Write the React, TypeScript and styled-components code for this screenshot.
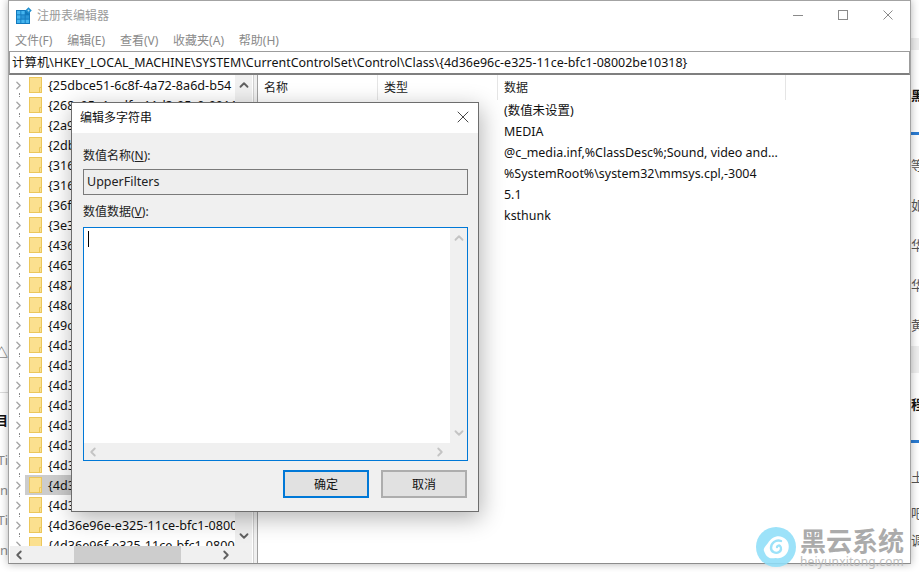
import React from 'react';
import styled, { createGlobalStyle } from 'styled-components';
import { FiChevronDown, FiChevronLeft, FiChevronRight, FiChevronUp, FiX } from 'react-icons/fi';

const uiFont = `"Noto Sans", "Noto Sans CJK SC", sans-serif`;

const treeRows = [
	'{25dbce51-6c8f-4a72-8a6d-b54',
	'{268c95a1-edfe-11d3-95c0-0011',
	'{2a9',
	'{2db',
	'{316',
	'{316',
	'{36f',
	'{3e3',
	'{436',
	'{465',
	'{487',
	'{48d',
	'{49c',
	'{4d3',
	'{4d3',
	'{4d3',
	'{4d3',
	'{4d3',
	'{4d3',
	'{4d3',
	'{4d3',
	'{4d3',
	'{4d36e96e-e325-11ce-bfc1-0800',
	'{4d36e96f-e325-11ce-bfc1-0800',
];

const listData = [
	'(数值未设置)',
	'MEDIA',
	'@c_media.inf,%ClassDesc%;Sound, video and...',
	'%SystemRoot%\\system32\\mmsys.cpl,-3004',
	'5.1',
	'ksthunk',
];

const menus = ['文件(F)', '编辑(E)', '查看(V)', '收藏夹(A)', '帮助(H)'];

function RegistryIcon() {
	return (
		<svg width="16" height="17" viewBox="0 0 16 17">
			<rect x="0" y="3" width="14" height="14" fill="#1279bd" />
			<rect x="1" y="4" width="3.4" height="3.4" fill="#45b5ef" />
			<rect x="5.3" y="4" width="3.4" height="3.4" fill="#45b5ef" />
			<rect x="1" y="8.3" width="3.4" height="3.4" fill="#45b5ef" />
			<rect x="5.3" y="8.3" width="3.4" height="3.4" fill="#2a95d6" />
			<rect x="9.6" y="8.3" width="3.4" height="3.4" fill="#2a95d6" />
			<rect x="1" y="12.6" width="3.4" height="3.4" fill="#45b5ef" />
			<rect x="5.3" y="12.6" width="3.4" height="3.4" fill="#45b5ef" />
			<rect x="9.6" y="12.6" width="3.4" height="3.4" fill="#45b5ef" />
			<rect x="10.2" y="1.2" width="4.6" height="4.6" fill="#1f8fd0" transform="rotate(45 12.5 3.5)" />
			<rect x="11.7" y="2.7" width="1.6" height="1.6" fill="#9fd8f5" transform="rotate(45 12.5 3.5)" />
		</svg>
	);
}

function FolderIcon() {
	return (
		<FolderSvg width="13" height="16" viewBox="0 0 13 16">
			<rect x="0.5" y="0.5" width="12" height="15" fill="#fbe08f" stroke="#ecc75a" />
			<path d="M10.5 15.5v-5h2" fill="none" stroke="#ecc75a" />
		</FolderSvg>
	);
}

function CloseGlyph() {
	return (
		<svg width="10" height="10" viewBox="0 0 10 10">
			<path d="M0.5 0.5l9 9M9.5 0.5l-9 9" stroke="#8a8a8a" strokeWidth="1" fill="none" />
		</svg>
	);
}

function WatermarkLogo() {
	return (
		<svg width="40" height="40" viewBox="0 0 40 40">
			<circle cx="20" cy="20" r="20" fill="#8fdff9" />
			<path
				d="M8 24c-1-3 2-5 4-8 3-5 9-8 14-6 6 2 8 8 6 14-2 5-7 8-12 7-3 0-6 1-8-1-2-1-3-4-4-6z"
				fill="#fff"
			/>
			<path
				d="M25 14c-5-2-10 2-10 7 0 4 5 6 8 4 2-1 3-4 1-6-1-1-3 0-3 1"
				fill="none"
				stroke="#8fdff9"
				strokeWidth="2.4"
				strokeLinecap="round"
			/>
		</svg>
	);
}

export default function App() {
	return (
		<Desktop>
			<GlobalStyle />
			<LeftStrip>
				<PeekText $top={344} $align="right">△</PeekText>
				<PeekRule $top={32} $height={1} />
				<PeekText $top={19} $bold $align="right">目</PeekText>
				<PeekText $top={24} $align="right" $muted>Ti</PeekText>
				<PeekText $top={14} $align="right" $muted>in</PeekText>
				<PeekText $top={14} $align="right" $muted>Ti</PeekText>
				<PeekText $top={14} $align="right" $muted>in</PeekText>
			</LeftStrip>

			<RegWindow>
				<TitleBar>
					<RegistryIcon />
					<TitleText>注册表编辑器</TitleText>
					<WindowControls>
						<MinimizeGlyph />
						<MaximizeGlyph />
						<CloseGlyph />
					</WindowControls>
				</TitleBar>
				<MenuBar>
					{menus.map(m => (
						<MenuItem key={m}>{m}</MenuItem>
					))}
				</MenuBar>
				<AddressBar>
					计算机\HKEY_LOCAL_MACHINE\SYSTEM\CurrentControlSet\Control\Class\{'{'}4d36e96c-e325-11ce-bfc1-08002be10318{'}'}
				</AddressBar>
				<Body>
					<TreePane>
						<TreeMain>
							<TreeRows>
								{treeRows.map((label, i) => (
									<TreeRow key={i}>
										<Expander>
											<FiChevronRight size={15} strokeWidth={2.6} color="#a6a6a6" />
										</Expander>
										<RowBody $selected={i === 20}>
											<FolderIcon />
											<RowLabel>{label}</RowLabel>
										</RowBody>
									</TreeRow>
								))}
							</TreeRows>
							<VScroll>
								<FiChevronUp size={14} strokeWidth={3.2} color="#606060" />
								<FiChevronDown size={14} strokeWidth={3.2} color="#606060" />
							</VScroll>
						</TreeMain>
						<HScroll>
							<FiChevronLeft size={14} strokeWidth={3.2} color="#606060" />
							<HThumb />
							<FiChevronRight size={14} strokeWidth={3.2} color="#606060" />
						</HScroll>
					</TreePane>
					<Splitter />
					<ListPane>
						<ListHeader>
							<HeaderCell $width={120}>名称</HeaderCell>
							<HeaderCell $width={120}>类型</HeaderCell>
							<HeaderCell $width={288}>数据</HeaderCell>
						</ListHeader>
						<ListValues>
							{listData.map(v => (
								<ListValue key={v}>{v}</ListValue>
							))}
						</ListValues>
					</ListPane>
				</Body>
			</RegWindow>

			<RightStrip>
				<PeekBlock $top={38} $height={12} />
				<PeekText $top={37} $bold>黑</PeekText>
				<PeekBar $top={29} />
				<PeekText $top={22}>等</PeekText>
				<PeekText $top={24}>如</PeekText>
				<PeekText $top={24}>华</PeekText>
				<PeekText $top={24}>华</PeekText>
				<PeekText $top={24}>黄</PeekText>
				<PeekBlock $top={13} $height={27} />
				<PeekText $top={23} $bold>程</PeekText>
				<PeekBar $top={28} />
				<PeekText $top={26}>土</PeekText>
				<PeekText $top={20}>吧</PeekText>
				<PeekText $top={11}>调</PeekText>
			</RightStrip>

			<Dialog>
				<DialogTitle>
					<span>编辑多字符串</span>
					<FiX size={20} strokeWidth={1} color="#222" />
				</DialogTitle>
				<DialogBody>
					<FieldLabel $top={14}>
						数值名称(<u>N</u>):
					</FieldLabel>
					<NameField>UpperFilters</NameField>
					<FieldLabel $top={8}>
						数值数据(<u>V</u>):
					</FieldLabel>
					<DataField>
						<DataMain>
							<DataText>
								<Caret />
							</DataText>
							<DataVScroll>
								<FiChevronUp size={14} strokeWidth={3.2} color="#c4c4c4" />
								<FiChevronDown size={14} strokeWidth={3.2} color="#c4c4c4" />
							</DataVScroll>
						</DataMain>
						<DataHScroll>
							<FiChevronLeft size={14} strokeWidth={3.2} color="#c4c4c4" />
							<FiChevronRight size={14} strokeWidth={3.2} color="#c4c4c4" />
						</DataHScroll>
					</DataField>
					<DialogButtons>
						<DialogButton $primary>确定</DialogButton>
						<DialogButton>取消</DialogButton>
					</DialogButtons>
				</DialogBody>
			</Dialog>

			<Watermark>
				<WatermarkLogo />
				<WatermarkText>
					<WatermarkName>黑云系统</WatermarkName>
					<WatermarkUrl>heiyunxitong.com</WatermarkUrl>
				</WatermarkText>
			</Watermark>
		</Desktop>
	);
}

const GlobalStyle = createGlobalStyle`
	html, body {
		margin: 0;
		padding: 0;
		background: #fff;
	}
	* {
		box-sizing: border-box;
	}
`;

const Desktop = styled.div`
	position: relative;
	width: 919px;
	height: 572px;
	overflow: hidden;
	display: flex;
	align-items: flex-start;
	font-family: ${uiFont};
	background: #fff;
`;

const LeftStrip = styled.div`
	width: 8px;
	height: 572px;
	flex-shrink: 0;
	overflow: hidden;
	display: flex;
	flex-direction: column;
	align-items: flex-end;
`;

const RightStrip = styled.div`
	width: 8px;
	height: 572px;
	flex-shrink: 0;
	overflow: hidden;
	display: flex;
	flex-direction: column;
`;

const PeekText = styled.div<{ $top: number; $bold?: boolean; $align?: string; $muted?: boolean }>`
	margin-top: ${p => p.$top}px;
	flex-shrink: 0;
	height: 16px;
	line-height: 16px;
	font-size: 13px;
	width: 14px;
	color: ${p => (p.$bold ? '#111' : p.$muted ? '#8a8a8a' : '#555')};
	font-weight: ${p => (p.$bold ? 700 : 400)};
	text-align: ${p => p.$align || 'left'};
`;

const PeekBlock = styled.div<{ $top: number; $height: number }>`
	margin-top: ${p => p.$top}px;
	height: ${p => p.$height}px;
	background: #eeeeee;
	flex-shrink: 0;
`;

const PeekBar = styled.div<{ $top: number }>`
	margin-top: ${p => p.$top}px;
	height: 3px;
	background: #2b7cd3;
	flex-shrink: 0;
`;

const PeekRule = styled.div<{ $top: number; $height: number }>`
	width: 8px;
	margin-top: ${p => p.$top}px;
	height: ${p => p.$height}px;
	background: #dcdcdc;
	flex-shrink: 0;
`;

const RegWindow = styled.div`
	width: 903px;
	height: 564px;
	flex-shrink: 0;
	background: #fff;
	border: 1px solid #a3a3a3;
	border-bottom-color: #8c8c8c;
	box-shadow: 0 0 8px rgba(0, 0, 0, 0.3);
	display: flex;
	flex-direction: column;
	position: relative;
`;

const TitleBar = styled.div`
	height: 28px;
	display: flex;
	align-items: center;
	padding: 0 17px 0 7px;
	flex-shrink: 0;
`;

const TitleText = styled.div`
	margin-left: 5px;
	font-size: 12px;
	color: #9b9b9b;
`;

const WindowControls = styled.div`
	margin-left: auto;
	display: flex;
	align-items: center;
	gap: 35px;
`;

const MinimizeGlyph = styled.div`
	width: 10px;
	height: 1px;
	background: #8a8a8a;
`;

const MaximizeGlyph = styled.div`
	width: 10px;
	height: 10px;
	border: 1px solid #8a8a8a;
`;

const MenuBar = styled.div`
	height: 22px;
	display: flex;
	align-items: center;
	padding-left: 6px;
	gap: 14.8px;
	flex-shrink: 0;
`;

const MenuItem = styled.div`
	font-size: 12px;
	color: #8a8a8a;
`;

const AddressBar = styled.div`
	height: 24px;
	flex-shrink: 0;
	border: 1px solid #9c9c9c;
	border-bottom: 2px solid #7f7f7f;
	padding-left: 2px;
	font-size: 12.45px;
	line-height: 21px;
	color: #111;
	white-space: nowrap;
`;

const Body = styled.div`
	flex: 1;
	min-height: 0;
	display: flex;
`;

const TreePane = styled.div`
	width: 243px;
	display: flex;
	flex-direction: column;
	padding-left: 1px;
`;

const TreeMain = styled.div`
	flex: 1;
	min-height: 0;
	display: flex;
`;

const TreeRows = styled.div`
	flex: 1;
	min-width: 0;
	overflow: hidden;
`;

const TreeRow = styled.div`
	position: relative;
	height: 20px;
	display: flex;
	align-items: center;

	/* dotted connector between the expanders */
	&::after {
		content: '';
		position: absolute;
		left: 9px;
		bottom: -2px;
		height: 4px;
		border-left: 1px dotted #8a8a8a;
	}
`;

const Expander = styled.div`
	width: 15px;
	flex-shrink: 0;
	padding-left: 2px;
	display: flex;
	align-items: center;
`;

const RowBody = styled.div<{ $selected?: boolean }>`
	flex: 1;
	min-width: 0;
	height: 20px;
	display: flex;
	align-items: center;
	padding-left: 4px;
	background: ${p => (p.$selected ? '#cccccc' : 'transparent')};
`;

const FolderSvg = styled.svg`
	flex-shrink: 0;
`;

const RowLabel = styled.div`
	margin-left: 6px;
	font-size: 12.6px;
	color: #111;
	white-space: nowrap;
`;

const VScroll = styled.div`
	width: 17px;
	flex-shrink: 0;
	background: #f0f0f0;
	display: flex;
	flex-direction: column;
	justify-content: space-between;
	align-items: center;
	padding: 3px 0;
`;

const HScroll = styled.div`
	height: 17px;
	flex-shrink: 0;
	background: #f0f0f0;
	display: flex;
	align-items: center;
	padding: 0 19px 0 2px;
	position: relative;
	justify-content: space-between;
`;

const HThumb = styled.div`
	position: absolute;
	left: 64px;
	width: 107px;
	height: 17px;
	background: #cdcdcd;
`;

const Splitter = styled.div`
	width: 5px;
	flex-shrink: 0;
	margin-left: 1px;
	background: #f0f0f0;
	border-left: 1px solid #d0d0d0;
	border-right: 1px solid #a0a0a0;
`;

const ListPane = styled.div`
	flex: 1;
	min-width: 0;
	display: flex;
	flex-direction: column;
`;

const ListHeader = styled.div`
	height: 25px;
	display: flex;
	flex-shrink: 0;
`;

const HeaderCell = styled.div<{ $width: number }>`
	width: ${p => p.$width}px;
	padding-left: 6px;
	font-size: 12px;
	line-height: 25px;
	color: #222;
	border-right: 1px solid #e5e5e5;
`;

const ListValues = styled.div`
	padding: 0 0 0 246px;
`;

const ListValue = styled.div`
	height: 21px;
	line-height: 21px;
	font-size: 12.45px;
	color: #111;
	white-space: nowrap;
`;

const Dialog = styled.div`
	position: absolute;
	left: 71px;
	top: 102px;
	width: 408px;
	height: 410px;
	border: 1px solid #6d6d6d;
	background: #f0f0f0;
	box-shadow: 2px 6px 22px rgba(0, 0, 0, 0.3);
	display: flex;
	flex-direction: column;
`;

const DialogTitle = styled.div`
	height: 30px;
	flex-shrink: 0;
	background: #fff;
	display: flex;
	align-items: center;
	justify-content: space-between;
	padding: 0 5px 2px 8px;
	font-size: 12px;
	color: #111;
`;

const DialogBody = styled.div`
	flex: 1;
	padding: 0 10px 0 11px;
	display: flex;
	flex-direction: column;
`;

const FieldLabel = styled.div<{ $top: number }>`
	margin-top: ${p => p.$top}px;
	height: 17px;
	line-height: 17px;
	font-size: 12px;
	color: #222;
`;

const NameField = styled.div`
	margin-top: 5px;
	height: 26px;
	line-height: 23px;
	border: 1px solid #7a7a7a;
	background: #eeeeee;
	padding-left: 3px;
	font-size: 12.5px;
	color: #222;
`;

const DataField = styled.div`
	margin-top: 7px;
	height: 234px;
	border: 1px solid #0078d7;
	background: #fff;
	display: flex;
	flex-direction: column;
`;

const DataMain = styled.div`
	flex: 1;
	min-height: 0;
	display: flex;
`;

const DataText = styled.div`
	flex: 1;
	padding: 3px 4px;
`;

const Caret = styled.div`
	width: 1px;
	height: 16px;
	background: #000;
`;

const DataVScroll = styled.div`
	width: 17px;
	flex-shrink: 0;
	background: #f0f0f0;
	display: flex;
	flex-direction: column;
	justify-content: space-between;
	align-items: center;
	padding: 3px 0;
`;

const DataHScroll = styled.div`
	height: 17px;
	flex-shrink: 0;
	background: #f0f0f0;
	display: flex;
	align-items: center;
	justify-content: space-between;
	padding: 0 20px 0 2px;
`;

const DialogButtons = styled.div`
	margin-top: 9px;
	padding-right: 1px;
	display: flex;
	justify-content: flex-end;
	gap: 12px;
`;

const DialogButton = styled.div<{ $primary?: boolean }>`
	width: 86px;
	height: 28px;
	background: #e1e1e1;
	border: 2px solid ${p => (p.$primary ? '#0078d7' : '#adadad')};
	font-size: 12px;
	color: #111;
	display: flex;
	align-items: center;
	justify-content: center;
`;

const Watermark = styled.div`
	position: absolute;
	left: 756px;
	top: 527px;
	display: flex;
	align-items: flex-start;
	gap: 4px;
	opacity: 0.88;
`;

const WatermarkText = styled.div`
	display: flex;
	flex-direction: column;
`;

const WatermarkName = styled.div`
	font-size: 26px;
	line-height: 28px;
	font-weight: 700;
	color: #a0a0a0;
	white-space: nowrap;
`;

const WatermarkUrl = styled.div`
	font-size: 12px;
	line-height: 14px;
	letter-spacing: 0.15px;
	color: #b5b5b5;
	white-space: nowrap;
`;
